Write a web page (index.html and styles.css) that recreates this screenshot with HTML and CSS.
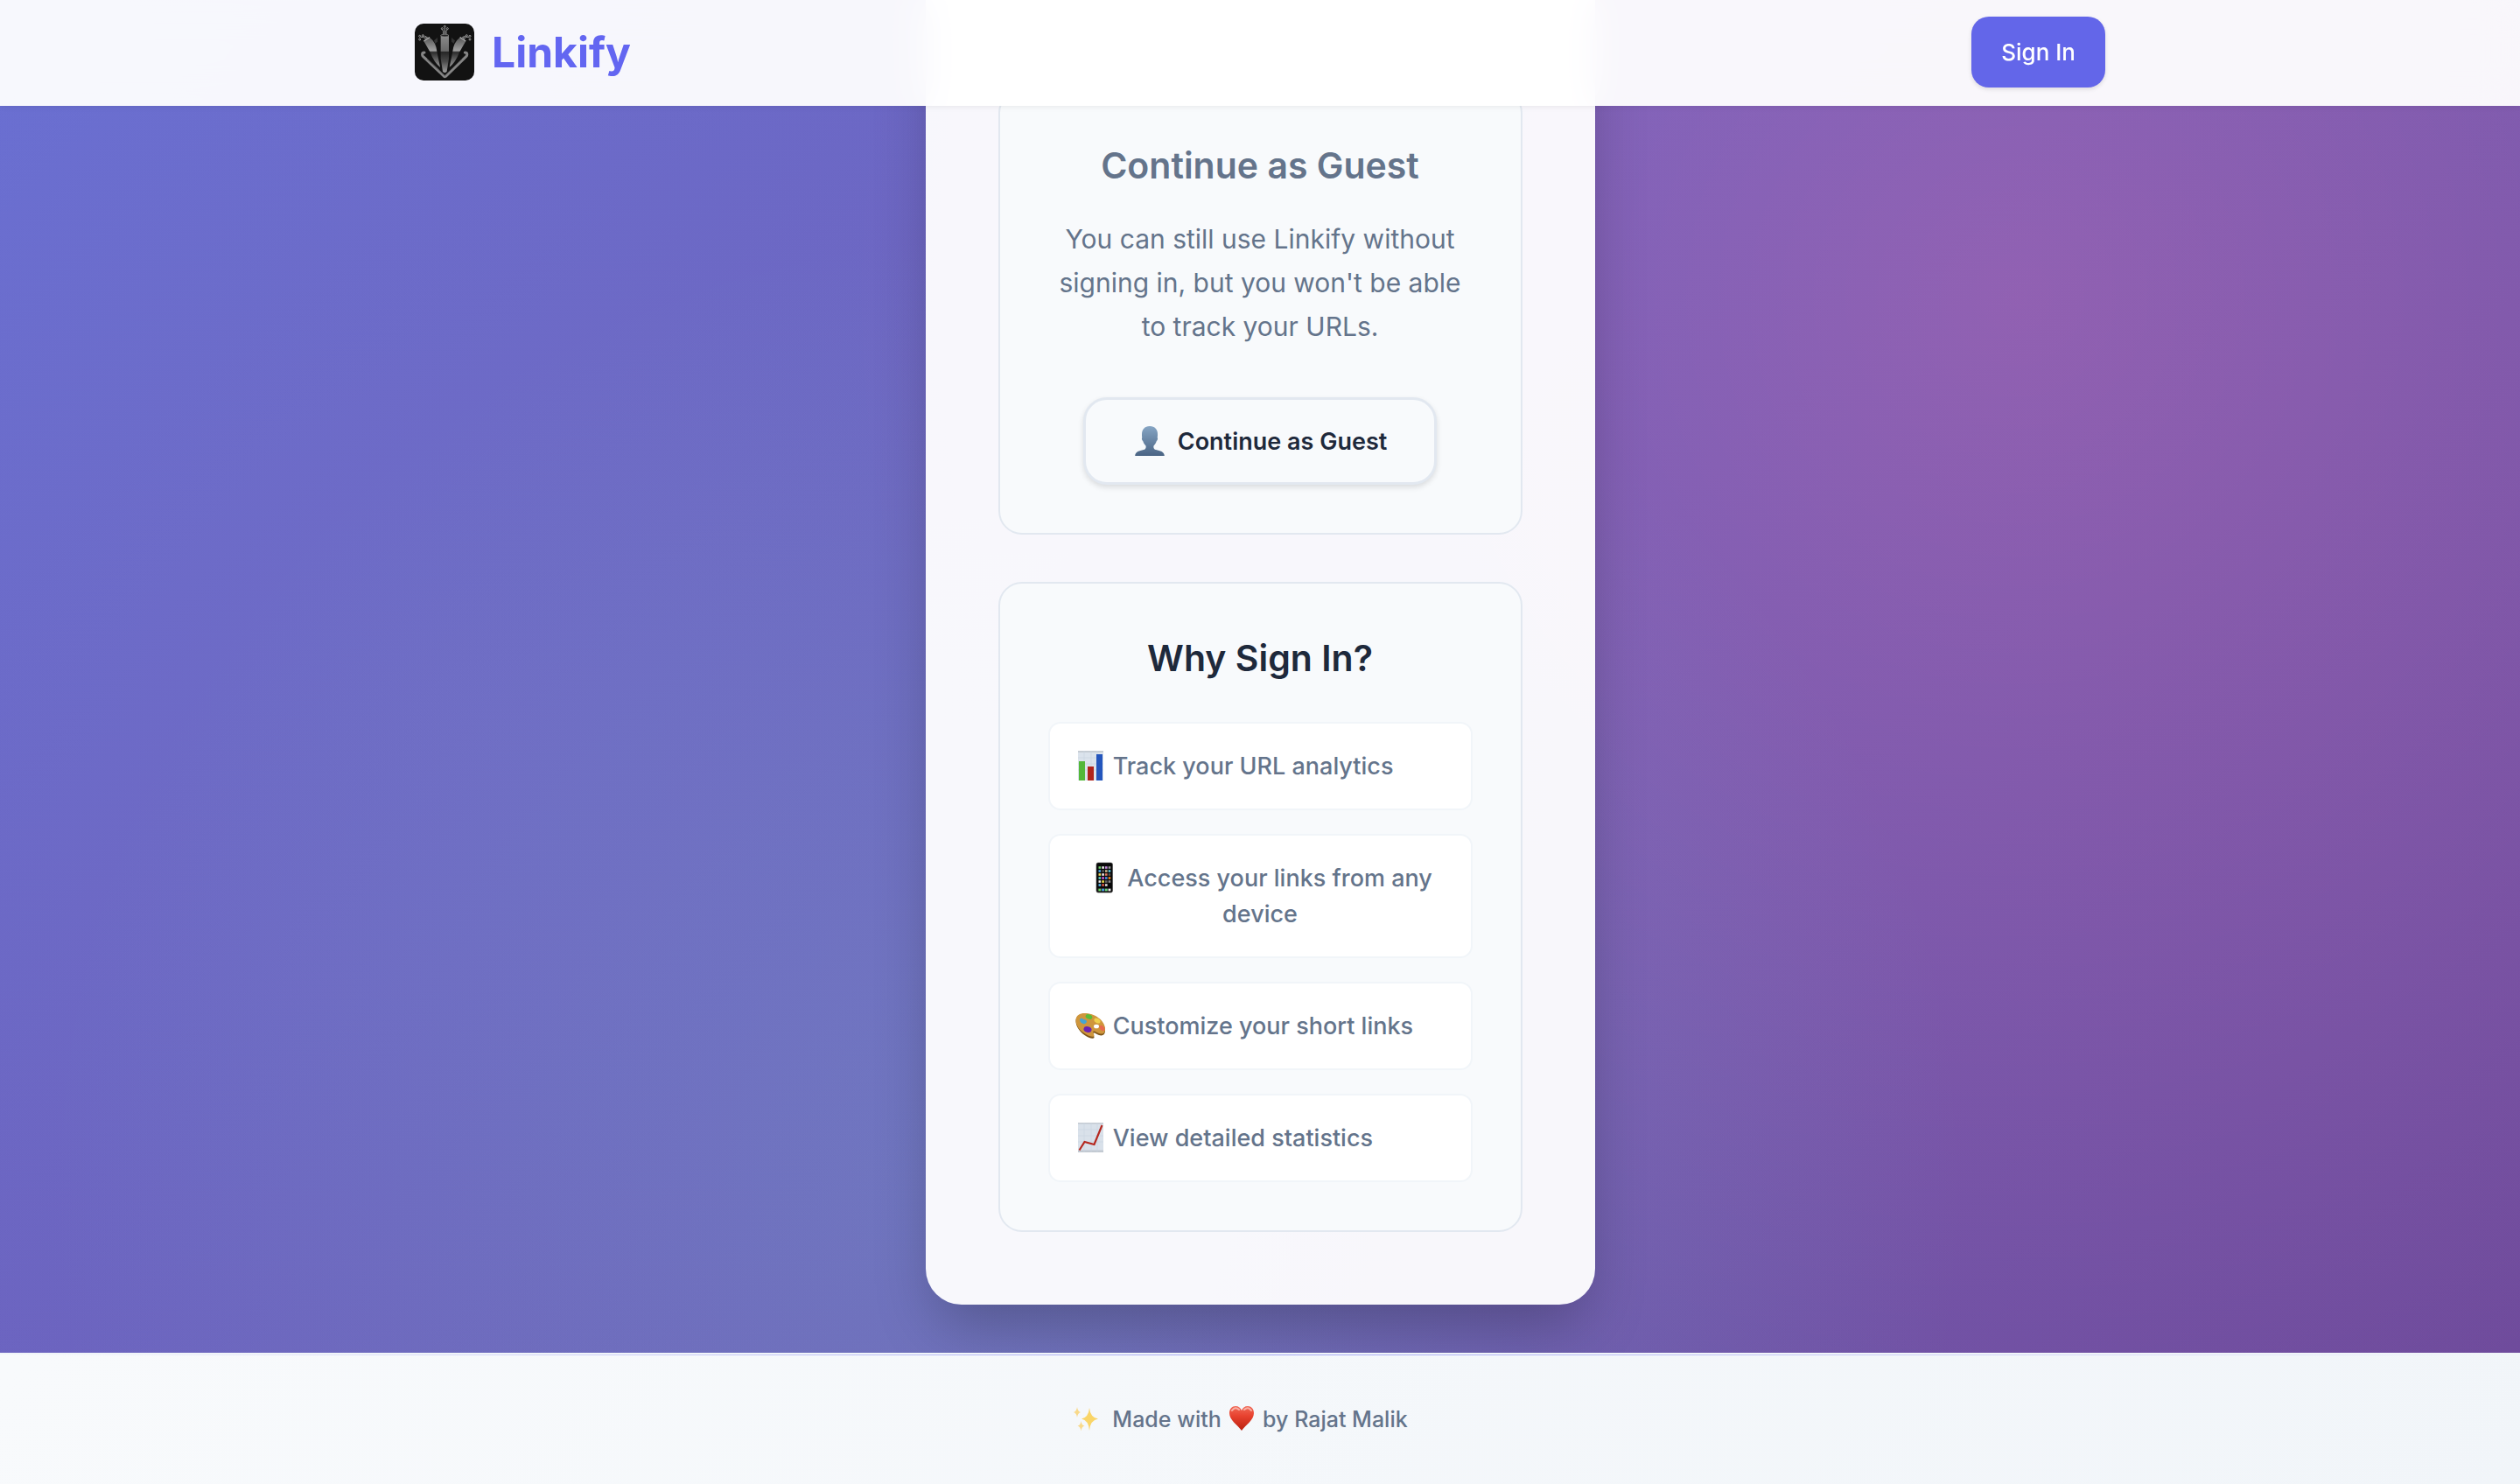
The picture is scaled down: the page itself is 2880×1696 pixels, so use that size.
FILE: index.html
```
<!DOCTYPE html>
<html lang="en">
<head>
<meta charset="utf-8">
<meta name="viewport" content="width=device-width, initial-scale=1">
<title>Linkify</title>
<link rel="stylesheet" href="styles.css">
</head>
<body>
<header class="site-header">
  <div class="header-inner">
    <a class="brand" href="#">
      <svg class="brand-logo" viewBox="0 0 204 195" preserveAspectRatio="none" aria-hidden="true">
        <defs>
          <linearGradient id="barrel" x1="0" y1="0" x2="0" y2="1">
            <stop offset="0" stop-color="#8a8a8a"/><stop offset=".42" stop-color="#6a6a6a"/>
            <stop offset=".45" stop-color="#262626"/><stop offset=".7" stop-color="#4a4a4a"/><stop offset="1" stop-color="#a0a0a0"/>
          </linearGradient>
          <linearGradient id="side" x1="0" y1="0" x2="0" y2="1">
            <stop offset="0" stop-color="#555"/><stop offset=".45" stop-color="#a2a2a2"/>
            <stop offset=".5" stop-color="#2c2c2c"/><stop offset="1" stop-color="#999"/>
          </linearGradient>
        </defs>
        <rect width="204" height="195" rx="30" fill="#121212"/>
        <path d="M66 58l12-10v14l-8 6zM138 58l-12-10v14l8 6z" fill="#333"/>
        <path d="M89 40h28v80l-7 44q-7 8-14 0l-7-44z" fill="url(#barrel)"/>
        <ellipse cx="103" cy="41" rx="14" ry="4" fill="#222" stroke="#999" stroke-width="2"/>
        <path d="M31 60l20-13q22 17 25 48l11 54q-21-16-34-51z" fill="url(#side)"/>
        <path d="M175 60l-20-13q-22 17-25 48l-11 54q21-16 34-51z" fill="url(#side)"/>
        <path d="M31 60l20-13M175 60l-20-13" stroke="#aaa" stroke-width="4"/>
        <path d="M33 99c-10 0-8 10-4 14l72 68q2 2 5 0l70-68c4-4 6-14-4-14" fill="none" stroke="#858585" stroke-width="9" stroke-linecap="round" stroke-linejoin="round"/>
        <path d="M42 121l61 57 59-57" fill="none" stroke="#353535" stroke-width="2"/>
        <g fill="none" stroke="#9a9a9a" stroke-width="3">
          <path d="M98 36V25l-4-5M103 36V14M108 36V25l4-5"/>
          <circle cx="94" cy="17" r="3"/><circle cx="103" cy="10" r="3"/><circle cx="112" cy="17" r="3"/>
          <path d="M38 54l-8-8-10 0M42 52l-13-12M45 49l-9-6"/>
          <circle cx="17" cy="54" r="3"/><circle cx="17" cy="43" r="3"/><circle cx="28" cy="41" r="3"/>
          <path d="M168 54l8-8 10 0M164 52l13-12M161 49l9-6"/>
          <circle cx="189" cy="54" r="3"/><circle cx="189" cy="43" r="3"/><circle cx="178" cy="41" r="3"/>
        </g>
      </svg>
      <span class="brand-name">Linkify</span>
    </a>
    <a class="sign-in" href="#">Sign In</a>
  </div>
</header>

<main class="page">
  <div class="card">
    <section class="panel">
      <h2 class="panel-title muted">Continue as Guest</h2>
      <p class="panel-text">You can still use Linkify without signing in, but you won't be able to track your URLs.</p>
      <button class="guest-button" type="button">
        <svg class="icon" viewBox="0 0 36 36" aria-hidden="true">
          <defs><linearGradient id="bust" x1="0" y1="0" x2="0" y2="1"><stop offset="0" stop-color="#86a5c4"/><stop offset="1" stop-color="#4a6484"/></linearGradient></defs>
          <path d="M18 1c6 0 9 4 9 9 0 2 0 3-.3 4 .8 1 .3 3-.9 4-.6 2-1.800 4-3.300 5.500-.5 2 .3 4 2.500 4.500 5 1.200 9.500 2 9.800 7H1.200c.3-5 4.800-5.800 9.800-7 2.200-.5 3-2.500 2.500-4.500-1.500-1.500-2.700-3.500-3.300-5.500-1.200-1-1.700-3-.9-4C9 13 9 12 9 10c0-5 3-9 9-9z" fill="url(#bust)"/>
        </svg>
        <span>Continue as Guest</span>
      </button>
    </section>

    <section class="panel">
      <h2 class="panel-title">Why Sign In?</h2>
      <ul class="benefits">
        <li class="benefit"><span><svg class="icon" viewBox="0 0 36 36" aria-hidden="true">
          <rect x="4" y="1" width="29" height="34" fill="#dbe3ec"/><path d="M4 1h29v2H4z" fill="#c6cdd4"/>
          <path d="M4 9h29M4 16h29M4 23h29M11 1v34M19 1v34M26 1v34" stroke="#c9d4e0" stroke-width=".6"/>
          <rect x="5" y="13" width="7" height="22" fill="#53b839"/><rect x="15" y="19" width="7" height="16" fill="#b0241c"/><rect x="25" y="5" width="7" height="30" fill="#2456bd"/>
        </svg> Track your URL analytics</span></li>
        <li class="benefit"><span><svg class="icon" viewBox="0 0 36 36" aria-hidden="true">
          <rect x="9" y="1" width="18.500" height="34" rx="2" fill="#090909" stroke="#444" stroke-width=".6"/>
          <g stroke-width="2.600" fill="none">
            <path d="M11.500 6.500h2.600" stroke="#74d36c"/><path d="M15.300 6.500h2.600" stroke="#eee"/><path d="M19 6.500h2.600" stroke="#c58be0"/><path d="M22.700 6.500h2.600" stroke="#999"/>
            <path d="M11.500 10.500h2.600" stroke="#4aa8e8"/><path d="M15.300 10.500h2.600" stroke="#555"/><path d="M19 10.500h2.600" stroke="#c8b48c"/><path d="M22.700 10.500h2.600" stroke="#58c4dc"/>
            <path d="M11.500 14.500h2.600" stroke="#f0dc60"/><path d="M15.300 14.500h2.600" stroke="#eee"/><path d="M19 14.500h2.600" stroke="#e07860"/><path d="M22.700 14.500h2.600" stroke="#555"/>
            <path d="M11.500 18.500h2.600" stroke="#60d0c8"/><path d="M15.300 18.500h2.600" stroke="#d058d8"/><path d="M19 18.500h2.600" stroke="#4a90e8"/><path d="M22.700 18.500h2.600" stroke="#f08820"/>
            <path d="M11.500 22.500h2.600" stroke="#eee"/><path d="M15.300 22.500h2.600" stroke="#f0e050"/><path d="M19 22.500h2.600" stroke="#666"/><path d="M22.700 22.500h2.600" stroke="#888"/>
            <path d="M11.500 26.500h2.600" stroke="#58b8f0"/><path d="M15.300 26.500h2.600" stroke="#e05848"/><path d="M19 26.500h2.600" stroke="#ddd"/>
          </g>
          <path d="M10.500 30.300h15.500v3.400H10.500z" fill="#333"/>
          <path d="M11.500 32h2.600" stroke="#62d858" stroke-width="2.600"/><path d="M15.300 32h2.600" stroke="#4aa8f0" stroke-width="2.600"/><path d="M19 32h2.600" stroke="#62d878" stroke-width="2.600"/><path d="M22.700 32h2.600" stroke="#eee" stroke-width="2.600"/>
        </svg> Access your links from any device</span></li>
        <li class="benefit"><span><svg class="icon" viewBox="0 0 36 36" aria-hidden="true">
          <path d="M1.500 13C1.500 7 7 4 13 4.500c10 .5 21 8 22 18 .5 6-3 8-7 6.500-3-1-4.500-3-6-2.500-2 .5 1 4 .5 5.500-1 2-7 0-11-3C6 25 1.500 19 1.500 13z" fill="#7d5418"/>
          <path d="M1.500 12C1.500 6 7 3.500 13 4c10 .5 21 7.500 22 17 .5 6-3 7.500-7 6-3-1-4.500-3-6-2.500-2 .5 1 4 .5 5.500-1 2-7 0-11-3C6 24 1.500 18 1.500 12z" fill="#cf963c"/>
          <ellipse cx="25" cy="19" rx="3" ry="2.300" fill="#fff"/>
          <path d="M6 11q2-3 4 0 4 0 4 3-2 3-4 2-4-1-4-5z" fill="#45a5d3"/><ellipse cx="16.500" cy="8" rx="4" ry="2.600" fill="#5abb36" transform="rotate(20 16.500 8)"/>
          <ellipse cx="26" cy="12.500" rx="3.800" ry="2.600" fill="#efd04c" transform="rotate(30 26 12.500)"/><ellipse cx="31.500" cy="21" rx="3.600" ry="2.400" fill="#e8694e" transform="rotate(50 31.500 21)"/><ellipse cx="15" cy="22.500" rx="4.600" ry="3.300" fill="#6c22b0" transform="rotate(15 15 22.500)"/>
        </svg> Customize your short links</span></li>
        <li class="benefit"><span><svg class="icon" viewBox="0 0 36 36" aria-hidden="true">
          <rect x="4" y="1" width="29" height="34" fill="#d9e1ea"/><path d="M4 1h29v1.500H4zM4 32.500h29V35H4z" fill="#c3cad2"/>
          <path d="M4 9h29M4 16h29M4 23h29M11 1v34M19 1v34M26 1v34" stroke="#c9d4e0" stroke-width=".6"/>
          <path d="M5.500 32.500l6-9.500 11 3L31.500 4" fill="none" stroke="#b5281f" stroke-width="2.200"/>
        </svg> View detailed statistics</span></li>
      </ul>
    </section>
  </div>
</main>

<footer class="site-footer">
  <svg class="sparkles" viewBox="0 0 28 28" aria-hidden="true">
    <path d="M18 1q1 11 10 12.500Q19 15 18 27q-1-12-9-13.500Q17 12 18 1z" fill="#f9d568"/>
    <path d="M4 0q.6 5 4 6-3.400 1-4 6-.6-5-4-6 3.400-1 4-6zM8.500 16q.6 5 4 5.500-3.400 1-4 6-.6-5-4-6 3.400-.5 4-5.500z" fill="#f8d98a"/>
  </svg>
  <p class="credit">Made with <svg class="heart" viewBox="0 0 30 30" aria-hidden="true">
    <defs><linearGradient id="heart" x1="0" y1="0" x2="0" y2="1"><stop offset="0" stop-color="#f06a58"/><stop offset=".4" stop-color="#e8422f"/><stop offset="1" stop-color="#b9200f"/></linearGradient></defs>
    <path d="M15 29C10 22 1 17 1 9c0-5 3-8 7-8 3.500 0 6 2 7 5 1-3 3.500-5 7-5 4 0 7 3 7 8 0 8-9 13-14 20z" fill="url(#heart)"/>
    <path d="M4 6q3.500-5 8-1M18 5q4.500-4 8 1" fill="none" stroke="#f9b0a4" stroke-width="2" stroke-linecap="round"/>
  </svg> by Rajat Malik</p>
</footer>
</body>
</html>
```
FILE: styles.css
```
* {
  box-sizing: border-box;
}

body {
  margin: 0;
  min-height: 100vh;
  display: flex;
  flex-direction: column;
  font-family: Inter, "Liberation Sans", sans-serif;
  font-size: 27px;
  color: #1e293b;
  background:
    radial-gradient(circle at 20% 50%, rgba(120, 119, 198, 0.3) 0%, transparent 50%),
    radial-gradient(circle at 80% 20%, rgba(255, 119, 178, 0.25) 0%, transparent 50%),
    radial-gradient(circle at 40% 80%, rgba(120, 219, 226, 0.22) 0%, transparent 50%),
    linear-gradient(135deg, #667eea -40%, #6f4a9a 100%);
}

.site-header {
  position: fixed;
  top: 0;
  left: 0;
  right: 0;
  z-index: 10;
  background: rgba(255, 255, 255, 0.95);
  backdrop-filter: blur(20px);
  box-shadow: 0 2px 6px rgba(0, 0, 0, 0.06);
}

.header-inner {
  max-width: 2040px;
  margin: 0 auto;
  padding: 19px 54px 21px;
  display: flex;
  align-items: center;
  justify-content: space-between;
}

.brand {
  display: flex;
  align-items: center;
  gap: 20px;
  color: #6366f1;
  text-decoration: none;
}

.brand-logo {
  display: block;
  width: 68px;
  height: 65px;
}

.brand-name {
  font-size: 48px;
  font-weight: 700;
  line-height: 60px;
}

.sign-in {
  padding: 20px 34px;
  border-radius: 20px;
  background: #6366e9;
  box-shadow: 0 2px 5px rgba(0, 0, 0, 0.12);
  color: #fff;
  font-size: 26px;
  font-weight: 500;
  line-height: 41px;
  text-decoration: none;
}

.page {
  flex: 1;
  padding: 0 54px 55px;
}

.card {
  max-width: 765px;
  margin: 0 auto;
  padding: 102px 83px 83px;
  display: flex;
  flex-direction: column;
  gap: 54px;
  border-radius: 0 0 41px 41px;
  background: rgba(255, 255, 255, 0.95);
  box-shadow: 0 34px 68px -12px rgba(0, 0, 0, 0.25);
}

.panel {
  padding: 55px;
  border: 2px solid #e2e8f0;
  border-radius: 27px;
  background: #f8fafc;
  text-align: center;
}

.panel-title {
  margin: 0;
  font-size: 41px;
  font-weight: 600;
  line-height: 61px;
}

.muted,
.panel-text {
  color: #64748b;
}

.panel-text {
  margin: 28px 0 56px;
  font-size: 30px;
  line-height: 50px;
}

.guest-button {
  display: inline-flex;
  align-items: center;
  gap: 13px;
  height: 100px;
  padding: 0 54px;
  border: 3px solid #e2e8f0;
  border-radius: 27px;
  background: #f8fafc;
  box-shadow: 0 3px 6px rgba(0, 0, 0, 0.12);
  color: #1e293b;
  font: inherit;
  font-weight: 600;
  vertical-align: top;
}

.icon {
  width: 38px;
  height: 36px;
  vertical-align: -8px;
}

.benefits {
  margin: 42px 0 0;
  padding: 0;
  display: flex;
  flex-direction: column;
  gap: 27px;
  list-style: none;
}

.benefit {
  display: flex;
  padding: 28px 27px;
  border: 2px solid #f1f5f9;
  border-radius: 14px;
  background: #fff;
  color: #64748b;
  font-weight: 500;
  line-height: 41px;
}

.site-footer {
  display: grid;
  grid-template-columns: 1fr auto 1fr;
  align-items: center;
  column-gap: 16px;
  padding: 52px 54px 53px;
  border-top: 2px solid #f1f5f9;
  background:
    linear-gradient(90deg, transparent, #a5a8f5, transparent) top / 100% 1px no-repeat,
    linear-gradient(135deg, #f8fafc 0%, #f1f5f9 100%);
}

.sparkles {
  width: 28px;
  height: 28px;
  justify-self: end;
}

.credit {
  margin: 0;
  color: #64748b;
  font-size: 25px;
  font-weight: 500;
  line-height: 44px;
}

.heart {
  width: 30px;
  height: 30px;
  margin: 0 2px;
  vertical-align: -5px;
}
```
